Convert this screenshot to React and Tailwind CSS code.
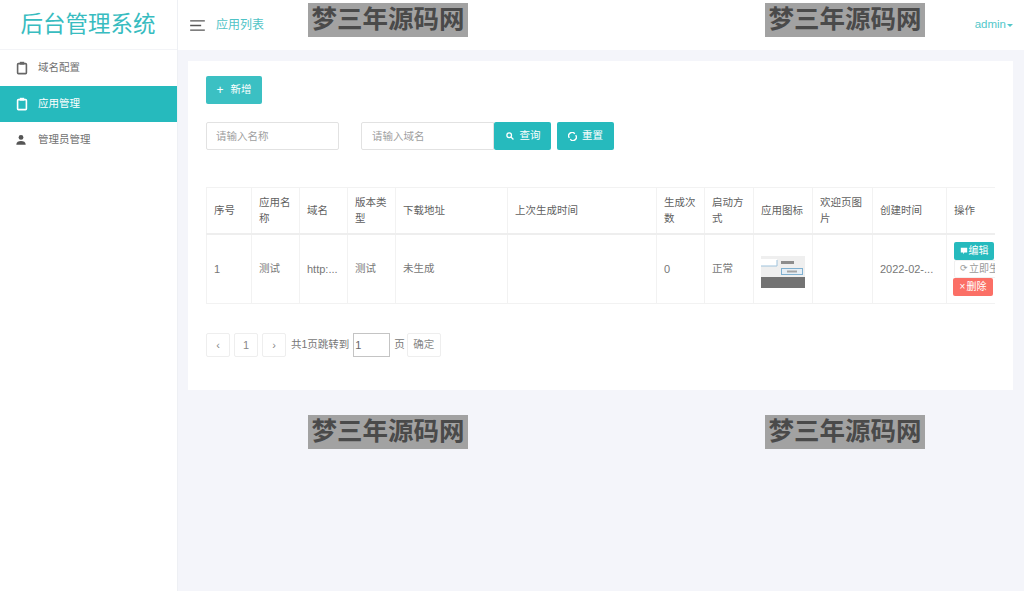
import React from "react";

const cols = [45, 48, 48, 48, 112, 149, 48, 49, 59, 60, 74, 49];
const heads = ["序号", "应用名称", "域名", "版本类型", "下载地址", "上次生成时间", "生成次数", "启动方式", "应用图标", "欢迎页图片", "创建时间", "操作"];

function Clip({ className }) {
  return (
    <svg viewBox="0 0 14 14" className={className} fill="none" stroke="currentColor" strokeWidth="1.6">
      <rect x="2.6" y="2.6" width="8.8" height="10" rx="0.8" />
      <rect x="4.8" y="0.8" width="4.4" height="2.8" fill="currentColor" stroke="none" />
    </svg>
  );
}

function Mark({ className }) {
  return (
    <div className={"absolute flex h-[34px] w-[160px] items-center justify-center whitespace-nowrap bg-[#a2a2a2] text-[25.5px] font-bold leading-none text-[#4a4a4a] " + className}>
      梦三年源码网
    </div>
  );
}

function NavItem({ active, label, icon }) {
  return (
    <div className={"flex h-[36px] items-center pl-[15px] text-[10.5px] " + (active ? "bg-[#26babd] text-white" : "text-[#707070]")}>
      <span className="flex w-[23px] items-center">{icon}</span>
      {label}
    </div>
  );
}

function Page({ children, className = "" }) {
  return (
    <span className={"flex h-[24px] items-center justify-center rounded-[2px] border border-[#eeeeee] bg-white text-[#888888] " + className}>
      {children}
    </span>
  );
}

export default function App() {
  return (
    <div className="relative flex h-[591px] w-[1024px] overflow-hidden bg-[#f4f5fa] font-['Liberation_Sans','Noto_Sans_CJK_SC',sans-serif]">
      <aside className="w-[178px] shrink-0 border-r border-[#eef0f4] bg-white">
        <div className="flex h-[50px] items-center justify-center border-b border-[#f3f4f7] pr-[1px] pt-[1px] text-[22.5px] text-[#38bcc0]">
          后台管理系统
        </div>
        <div>
          <NavItem label="域名配置" icon={<Clip className="h-[14px] w-[14px] text-[#666666]" />} />
          <NavItem active label="应用管理" icon={<Clip className="h-[14px] w-[14px] text-white" />} />
          <NavItem
            label="管理员管理"
            icon={
              <svg viewBox="0 0 14 14" className="h-[12px] w-[12px] text-[#555555]" fill="currentColor">
                <circle cx="7" cy="4" r="2.8" />
                <path d="M1.5 12.5c0-3 2.5-4.2 5.5-4.2s5.5 1.2 5.5 4.2z" />
              </svg>
            }
          />
        </div>
      </aside>

      <main className="min-w-0 flex-1">
        <header className="flex h-[50px] items-center justify-between bg-white pl-[12px] pr-[11px]">
          <div className="flex items-center">
            <svg viewBox="0 0 16 12" className="h-[11px] w-[15px] text-[#555555]" stroke="currentColor" strokeWidth="1.5">
              <path d="M0 1h16M0 6h12M0 11h16" />
            </svg>
            <span className="ml-[11px] text-[12px] text-[#4fc3c6]">应用列表</span>
          </div>
          <div className="flex items-center text-[11.5px] text-[#53c7ca]">
            admin
            <span className="ml-[1px] mt-[1px] h-0 w-0 border-x-[3px] border-t-[3px] border-x-transparent border-t-[#53c7ca]" />
          </div>
        </header>

        <div className="pl-[10px] pr-[11px] pt-[11px]">
          <section className="h-[329px] bg-white px-[18px] pt-[15px]">
            <button className="flex h-[28px] w-[56px] items-center justify-center gap-[7px] rounded-[2px] bg-[#3bc0c3] text-[10.5px] text-white">
              <span className="text-[12px] leading-none">+</span>
              新增
            </button>

            <div className="mt-[18px] flex h-[28px] items-center">
              <input
                readOnly
                placeholder="请输入名称"
                className="h-[28px] w-[133px] rounded-[2px] border border-[#e2e2e2] px-[9px] text-[10.5px] outline-none placeholder:text-[#a0a0a0]"
              />
              <input
                readOnly
                placeholder="请输入域名"
                className="ml-[22px] h-[28px] w-[133px] rounded-l-[2px] border border-[#e2e2e2] px-[10px] text-[10.5px] outline-none placeholder:text-[#a0a0a0]"
              />
              <button className="flex h-[28px] w-[57px] items-center justify-center gap-[6px] rounded-[2px] bg-[#26babd] pl-[1px] text-[10.5px] text-white">
                <svg viewBox="0 0 10 10" className="h-[8px] w-[8px]" fill="none" stroke="currentColor" strokeWidth="1.6">
                  <circle cx="4" cy="4" r="2.9" />
                  <path d="M6.2 6.2 9.3 9.3" />
                </svg>
                查询
              </button>
              <button className="ml-[6px] flex h-[28px] w-[57px] items-center justify-center gap-[5px] rounded-[2px] bg-[#26babd] text-[10.5px] text-white">
                <svg viewBox="0 0 10 10" className="h-[9px] w-[9px]" fill="none" stroke="currentColor" strokeWidth="1.5">
                  <path d="M1.5 6.5A3.7 3.7 0 0 1 7.5 2M8.5 3.5A3.7 3.7 0 0 1 2.5 8" />
                </svg>
                重置
              </button>
            </div>

            <div className="mt-[37px] w-[789px] overflow-hidden">
              <table className="w-[789px] table-fixed border-collapse text-[10.5px] text-[#777777]">
                <colgroup>
                  {cols.map((w, i) => (
                    <col key={i} style={{ width: w }} />
                  ))}
                </colgroup>
                <thead>
                  <tr className="h-[46px] border-b-2 border-[#eeeeee]">
                    {heads.map((h) => (
                      <th key={h} className="border border-[#f2f2f2] px-[7px] text-left font-normal leading-[16px] text-[#5f5f5f]">
                        {h}
                      </th>
                    ))}
                  </tr>
                </thead>
                <tbody>
                  <tr className="h-[70px]">
                    <td className="border border-[#f2f2f2] px-[7px] text-[11px]">1</td>
                    <td className="border border-[#f2f2f2] px-[7px]">测试</td>
                    <td className="whitespace-nowrap border border-[#f2f2f2] px-[7px] text-[11px]">http:...</td>
                    <td className="border border-[#f2f2f2] px-[7px]">测试</td>
                    <td className="border border-[#f2f2f2] px-[7px]">未生成</td>
                    <td className="border border-[#f2f2f2] px-[7px]"></td>
                    <td className="border border-[#f2f2f2] px-[7px] text-[11px]">0</td>
                    <td className="border border-[#f2f2f2] px-[7px]">正常</td>
                    <td className="border border-[#f2f2f2] px-[7px]">
                      <svg viewBox="0 0 44 32" className="mt-[7px] h-[32px] w-[44px]">
                        <rect width="44" height="32" fill="#efefef" />
                        <rect width="16" height="7" y="3" fill="#ffffff" />
                        <path d="M0 10h16V4" stroke="#9fc3dc" fill="none" />
                        <rect x="20" y="5" width="13" height="3" fill="#8d8d8d" />
                        <rect x="20.5" y="12.5" width="21" height="6" fill="#e6eef5" stroke="#7fb0d0" />
                        <rect x="26" y="14.5" width="10" height="2" fill="#a5a5a5" />
                        <rect y="21" width="44" height="11" fill="#737373" />
                      </svg>
                    </td>
                    <td className="border border-[#f2f2f2] px-[7px]"></td>
                    <td className="whitespace-nowrap border border-[#f2f2f2] px-[7px] text-[11px]">2022-02-...</td>
                    <td className="overflow-hidden border border-[#f2f2f2] pl-[7px] pr-0">
                      <div className="flex w-[60px] flex-col items-start text-[10px] leading-none">
                        <span className="flex h-[18px] w-[40px] items-center justify-center rounded-[2px] bg-[#26babd] text-white">
                          <svg viewBox="0 0 10 10" className="mr-[1px] h-[8px] w-[8px]" fill="currentColor">
                            <path d="M1 1h8v6H5.5L4 9V7H1z" />
                          </svg>
                          编辑
                        </span>
                        <span className="flex h-[18px] w-[60px] items-center whitespace-nowrap rounded-[2px] border border-[#f0f0f0] pl-[5px] text-[#999999]">
                          <span className="mr-[1px] text-[9px]">⟳</span>立即生成
                        </span>
                        <span className="-ml-[1px] flex h-[18px] w-[40px] items-center justify-center rounded-[2px] bg-[#fb6f66] text-white">
                          <span className="mr-[1px] text-[10px]">×</span>删除
                        </span>
                      </div>
                    </td>
                  </tr>
                </tbody>
              </table>
            </div>

            <div className="mt-[29px] flex h-[24px] items-center text-[10.5px] text-[#777777]">
              <Page className="w-[24px] text-[11px]">‹</Page>
              <Page className="ml-[4px] w-[24px] text-[11px]">1</Page>
              <Page className="ml-[4px] w-[24px] text-[11px]">›</Page>
              <span className="ml-[5px]">共1页跳转到</span>
              <input
                readOnly
                value="1"
                className="ml-[4px] h-[24px] w-[37px] border border-[#c4c4c4] px-[1px] text-[11px] text-[#666666] outline-none"
              />
              <span className="ml-[4px]">页</span>
              <Page className="ml-[2px] w-[34px] text-[10.5px]">确定</Page>
            </div>
          </section>
        </div>
      </main>

      <Mark className="left-[308px] top-[3px]" />
      <Mark className="left-[765px] top-[3px]" />
      <Mark className="left-[308px] top-[415px]" />
      <Mark className="left-[765px] top-[415px]" />
    </div>
  );
}
